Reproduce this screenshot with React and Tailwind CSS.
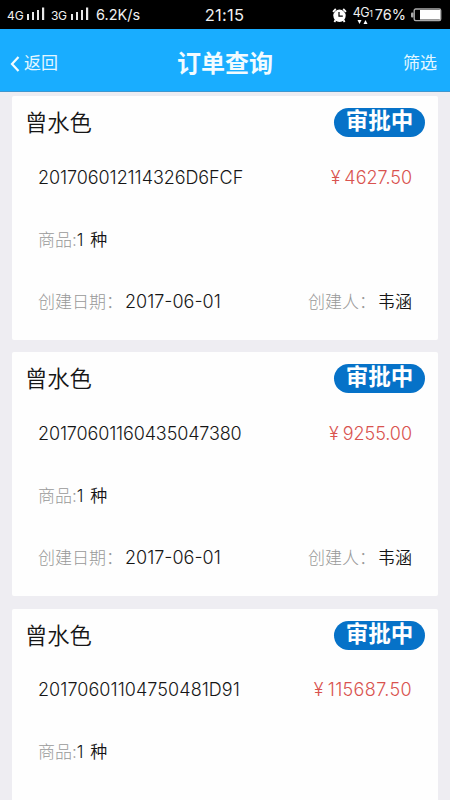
const orders = [
  { id: "201706012114326D6FCF", name: "曾水色", price: "4627.50", date: "2017-06-01", creator: "韦涵", idSpacing: "tracking-[-0.07px]", priceSpacing: "tracking-normal" },
  { id: "20170601160435047380", name: "曾水色", price: "9255.00", date: "2017-06-01", creator: "韦涵", idSpacing: "tracking-[-0.14px]", priceSpacing: "tracking-[-0.05px]" },
  { id: "20170601104750481D91", name: "曾水色", price: "115687.50", date: "2017-06-01", creator: "韦涵", idSpacing: "tracking-[0.06px]", priceSpacing: "tracking-[0.35px]" },
];

const Signal = () => (
  <svg width="18" height="13" viewBox="0 0 18 13" fill="#e8e8e8">
    <rect x="0" y="7" width="2" height="6" />
    <rect x="5" y="5" width="2" height="8" />
    <rect x="10" y="3" width="2" height="10" />
    <rect x="15" y="0.5" width="2.2" height="12.5" />
  </svg>
);

const AlarmIcon = () => (
  <svg width="15" height="15" viewBox="0 0 15 15">
    <circle cx="7.5" cy="7.8" r="6.2" fill="#fff" />
    <path d="M1 3.8 3.8 1M11.2 1 14 3.8M3.4 12.2 2.4 14M11.6 12.2l1 1.8" stroke="#fff" strokeWidth="1.8" />
    <path d="M7 4v4.2h3.8" stroke="#000" strokeWidth="1.2" fill="none" />
  </svg>
);

const BatteryIcon = () => (
  <svg width="31" height="14" viewBox="0 0 31 14">
    <rect x="3.2" y="1" width="26.5" height="11.6" rx="1.5" fill="#000" stroke="#aaa" strokeWidth="1.4" />
    <rect x="0" y="4.5" width="2.5" height="5" rx="1" fill="#aaa" />
    <rect x="9" y="2" width="20" height="9.6" fill="#fff" />
  </svg>
);

const StatusBar = () => {
  return (
    <div className="grid h-[29px] grid-cols-[1fr_auto_1fr] items-center bg-black pt-px pr-2 pl-[7px] text-[#f0f0f0]">
      <div className="flex items-center">
        <span className="w-5 pt-[2px] text-[12px] leading-4">4G</span>
        <div className="pb-[3px]">
          <Signal />
        </div>
        <span className="ml-[6px] w-[20px] pt-[2px] text-[12px] leading-4 tracking-[-0.3px]">3G</span>
        <div className="pb-[3px]">
          <Signal />
        </div>
        <span className="ml-[7px] text-[14.5px]">6.2K/s</span>
      </div>
      <span className="pt-px text-[16.5px] tracking-[0.2px]">21:15</span>
      <div className="flex items-center justify-end">
        <AlarmIcon />
        <div className="ml-[6px] flex h-[18px] w-[22px] flex-col">
          <span className="text-[12.5px] leading-[13px] tracking-[-0.5px] whitespace-nowrap">
            4G<span className="text-[9px]">1</span>
          </span>
          <svg className="ml-1" width="12" height="4" viewBox="0 0 12 4" fill="#fff">
            <path d="M0.5 0h4l-2 4zM6.5 4h4l-2-4z" />
          </svg>
        </div>
        <span className="mr-[5px] text-[14.5px]">76%</span>
        <BatteryIcon />
      </div>
    </div>
  );
};

const NavBar = () => {
  return (
    <div className="grid h-[63px] grid-cols-[1fr_auto_1fr] items-center border-b border-[#3f97cf] bg-[#19adff] pt-2 pr-[13px] pl-[10px] text-[17px] text-[#e4f7ff]">
      <div className="flex items-center gap-1">
        <svg width="10" height="16" viewBox="0 0 10 16" fill="none" stroke="#f4fcff" strokeWidth="2.2">
          <path d="M8.5 1 2 8l6.5 7" />
        </svg>
        <span>返回</span>
      </div>
      <h1 className="pl-[3px] text-2xl font-bold text-[#f2fbff]">订单查询</h1>
      <span className="text-right">筛选</span>
    </div>
  );
};

const OrderCard = ({ order }) => {
  return (
    <div className="h-[244px] shrink-0 rounded-[2px] bg-[#fefefe] text-[17px] leading-5 text-[#161616]">
      <div className="flex h-[50px] items-start justify-between pt-3 pr-[13px] pl-[13px]">
        <h3 className="text-[22.3px] leading-[30px] font-[350]">{order.name}</h3>
        <span className="h-[29px] w-[91px] rounded-full bg-[#0672c8] text-center text-[22.5px] leading-[25px] font-bold text-white">
          审批中
        </span>
      </div>
      <div className="px-[26px]">
        <div className="flex h-[62px] items-center justify-between pt-px text-[18px] font-light">
          <span className={order.idSpacing}>{order.id}</span>
          <span className={`text-[#d9534f] ${order.priceSpacing}`}>
            <span className="mr-1">¥</span>
            {order.price}
          </span>
        </div>
        <div className="flex h-[62px] items-center pt-px">
          <span className="font-light text-[#999]">商品:</span>
          <span className="font-[350] [word-spacing:2px]">1 种</span>
        </div>
        <div className="flex h-[62px] items-center justify-between pt-0.5">
          <div className="flex items-center gap-0.5">
            <span className="font-light text-[#999]">创建日期：</span>
            <span className="text-[18px] font-[350]">{order.date}</span>
          </div>
          <div className="flex items-center gap-0.5">
            <span className="font-light text-[#999]">创建人：</span>
            <span className="font-[350]">{order.creator}</span>
          </div>
        </div>
      </div>
    </div>
  );
};

const App = () => {
  return (
    <div className="flex h-[800px] w-[450px] flex-col overflow-hidden bg-[#eeedf2] font-[Inter,'Noto_Sans_CJK_SC',sans-serif]">
      <StatusBar />
      <NavBar />
      <div className="flex min-h-0 flex-1 flex-col gap-[12.4px] overflow-hidden px-3 pt-1">
        {orders.map((order) => (
          <OrderCard key={order.id} order={order} />
        ))}
      </div>
    </div>
  );
};

export default App;
